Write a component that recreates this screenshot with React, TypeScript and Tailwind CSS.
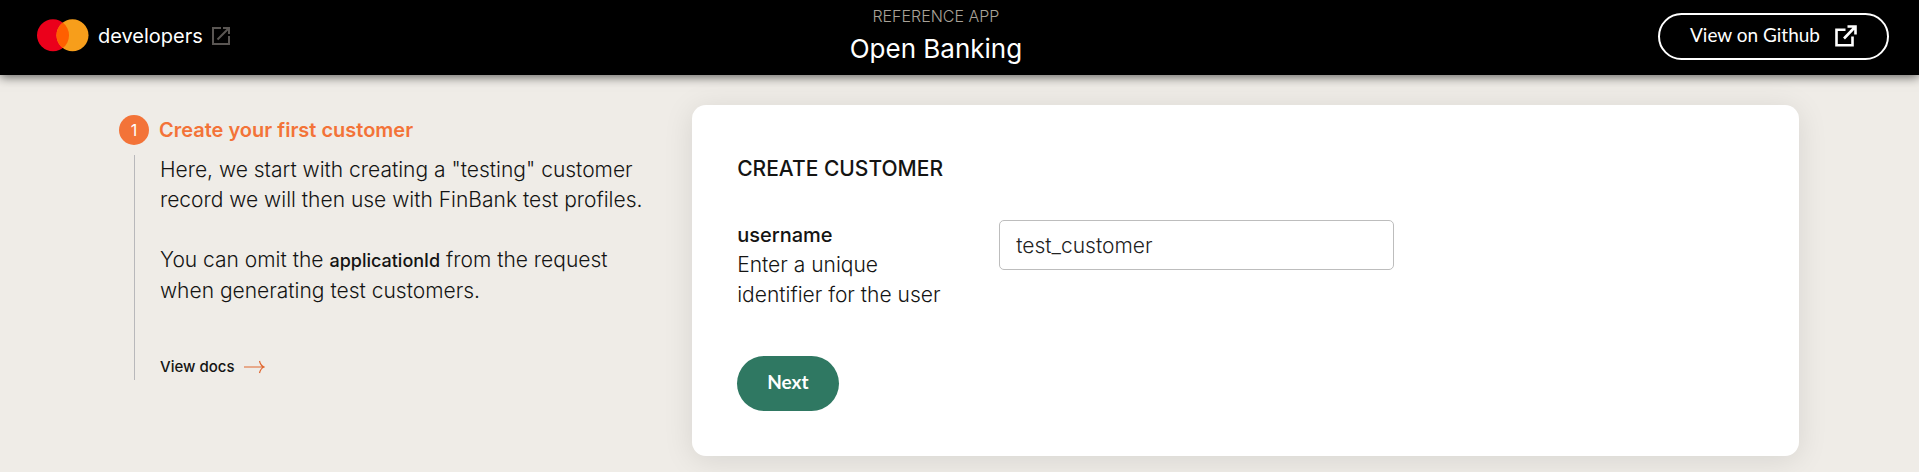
import { useState } from "react";

function MastercardLogo() {
  return (
    <svg width="52" height="33" viewBox="0 0 52 33" aria-hidden="true">
      <circle cx="16" cy="16.3" r="16" fill="#eb001b" />
      <circle cx="35.5" cy="16.3" r="16" fill="#f79e1b" />
      <path d="M25.75 3.6a16 16 0 0 1 0 25.4a16 16 0 0 1 0-25.4z" fill="#ff5f00" />
    </svg>
  );
}

function OutlineLinkIcon() {
  return (
    <svg width="18" height="18" viewBox="0 0 18 18" fill="none" stroke="#5a5653" strokeWidth="2" aria-hidden="true">
      <path d="M9 1H1v16h16V9" />
      <path d="M11 1h6v6M17 1L5.500 12.500" />
    </svg>
  );
}

function GithubLinkIcon() {
  return (
    <svg width="22" height="22" viewBox="0 0 22 22" fill="none" stroke="#fff" strokeWidth="2.600" aria-hidden="true">
      <path d="M10.500 4.800H1.500v15.400h16v-8.700" />
      <path d="M12.500 1.500h8v8M20.500 1.500L9 13.500" />
    </svg>
  );
}

function ArrowIcon() {
  return (
    <svg width="21" height="14" viewBox="0 0 21 14" fill="none" stroke="#e0662f" strokeWidth="1.200" aria-hidden="true">
      <path d="M0 7h20M15.500 1q1 4.500 4.500 6q-3.500 1.500-4.500 6" />
    </svg>
  );
}

function Header() {
  return (
    <header className="relative flex h-[75px] items-center justify-between bg-black pr-[30px] pb-[2px] pl-[37px] text-white shadow-[0_2px_10px_rgba(0,0,0,0.6)]">
      <a href="#developers" className="flex items-center gap-[9px] pb-[2px] font-[Inter,sans-serif] text-[20px]">
        <MastercardLogo />
        <span>developers</span>
        <OutlineLinkIcon />
      </a>
      <div className="mr-4 flex flex-col items-center font-[Inter,sans-serif]">
        <span className="text-base leading-6 font-light text-[#a8a298]">REFERENCE APP</span>
        <h1 className="text-[26px] leading-[42px]">Open Banking</h1>
      </div>
      <a
        href="#github"
        className="flex h-[47px] items-center gap-[15px] rounded-full border-2 border-white px-[30px] pb-[2px] text-[19px]"
      >
        View on Github
        <GithubLinkIcon />
      </a>
    </header>
  );
}

function StepGuide() {
  return (
    <section className="pt-[10px] font-[Inter,sans-serif]">
      <div className="flex items-center gap-[10px] text-[#f37338]">
        <span className="flex size-[30px] items-center justify-center rounded-full bg-[#f37338] text-base text-white">1</span>
        <h2 className="text-[20px] leading-[30px] font-semibold">Create your first customer</h2>
      </div>
      <div className="mt-[10px] ml-[15px] border-l border-[#b8b8bb] pl-[25px] text-[21px] leading-[30px] font-light text-[#141413]">
        <p>
          Here, we start with creating a "testing" customer
          <br />
          record we will then use with FinBank test profiles.
        </p>
        <p className="mt-[30px]">
          You can omit the <b className="text-[18px] font-medium">applicationId</b> from the request
          <br />
          when generating test customers.
        </p>
        <a href="#docs" className="mt-12 flex w-fit items-center gap-[10px] text-[15px] leading-[26px] font-medium">
          View docs
          <ArrowIcon />
        </a>
      </div>
    </section>
  );
}

function CustomerForm() {
  const [username, setUsername] = useState("test_customer");
  return (
    <form
      onSubmit={(e) => e.preventDefault()}
      className="rounded-[14px] bg-white p-[45px] text-[#141413] shadow-[0_4px_30px_rgba(0,0,0,0.1)]"
    >
      <h2 className="pt-[4px] font-[Inter,sans-serif] text-[21px] leading-[30px] font-medium">CREATE CUSTOMER</h2>
      <div className="mt-9 grid grid-cols-[minmax(0,262px)_minmax(0,395px)] font-[Inter,sans-serif]">
        <div className="pr-12 leading-[30px]">
          <label htmlFor="username" className="block text-[20px] font-medium">
            username
          </label>
          <p id="username-hint" className="text-[21px] font-light">
            Enter a unique identifier for the user
          </p>
        </div>
        <input
          id="username"
          aria-describedby="username-hint"
          value={username}
          onChange={(e) => setUsername(e.target.value)}
          className="h-[50px] rounded-[5px] border border-[#bdbdbd] px-4 text-[21px] font-light text-[#222]"
        />
      </div>
      <button type="submit" className="mt-[46px] h-[55px] rounded-full bg-[#2f7862] px-[30px] pb-[2px] text-[19px] font-bold text-white">
        Next
      </button>
    </form>
  );
}

export default function App() {
  return (
    <div className="min-h-screen bg-[#efece7] font-[Lato,sans-serif]">
      <Header />
      <main className="grid grid-cols-[29fr_56fr] items-start pt-[30px] pr-[120px] pb-[15px] pl-[119px]">
        <StepGuide />
        <CustomerForm />
      </main>
    </div>
  );
}
